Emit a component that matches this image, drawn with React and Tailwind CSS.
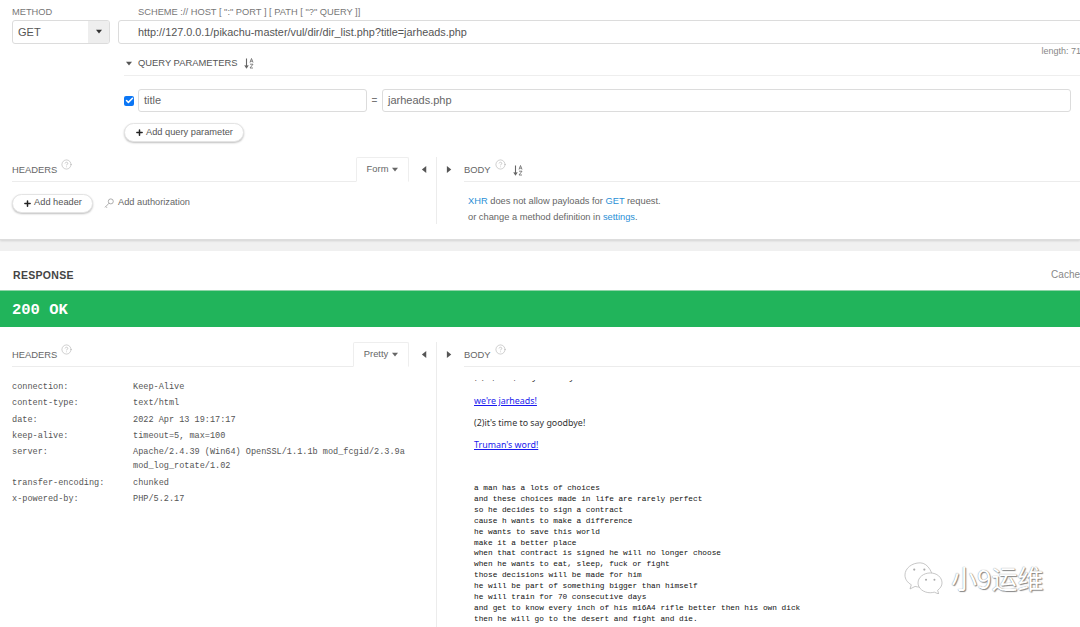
import { Check, CircleHelp, Plus } from 'lucide-react'

const SANS = 'font-["Liberation_Sans",Arial,sans-serif]'

const responseHeaders = [
  ['connection:', ['Keep-Alive']],
  ['content-type:', ['text/html']],
  ['date:', ['2022 Apr 13 19:17:17']],
  ['keep-alive:', ['timeout=5, max=100']],
  ['server:', ['Apache/2.4.39 (Win64) OpenSSL/1.1.1b mod_fcgid/2.3.9a', 'mod_log_rotate/1.02']],
  ['transfer-encoding:', ['chunked']],
  ['x-powered-by:', ['PHP/5.2.17']],
]

const poem = [
  'a man has a lots of choices',
  'and these choices made in life are rarely perfect',
  'so he decides to sign a contract',
  'cause h wants to make a difference',
  'he wants to save this world',
  'make it a better place',
  'when that contract is signed he will no longer choose',
  'when he wants to eat, sleep, fuck or fight',
  'those decisions will be made for him',
  'he will be part of something bigger than himself',
  'he will train for 70 consecutive days',
  'and get to know every inch of his m16A4 rifle better then his own dick',
  'then he will go to the desert and fight and die.',
  'that is the fight he is destined to do',
]

function Caret({ dir = 'down', className = '' }) {
  const points = { down: '0,1 8,1 4,6', left: '6,0 6,8 1,4', right: '1,0 1,8 6,4' }[dir]
  return (
    <svg viewBox="0 0 8 8" className={`shrink-0 ${className}`}>
      <polygon points={points} fill="currentColor" />
    </svg>
  )
}

function SortIcon() {
  return (
    <svg viewBox="0 0 10 11" className="w-[10px] h-[11px] text-[#666]">
      <path d="M2.5 0.5V9M0.8 7.2L2.5 9.8L4.2 7.2" fill="none" stroke="currentColor" strokeWidth="1.1" />
      <path d="M6 4.5L7.5 0.5L9 4.5M6.5 3.2H8.5M6 6.2H9L6 10H9" fill="none" stroke="currentColor" strokeWidth="0.8" />
    </svg>
  )
}

function KeyIcon() {
  return (
    <svg viewBox="0 0 10 11" className="w-[10px] h-[11px] text-[#999]" fill="none" stroke="currentColor" strokeWidth="0.8">
      <circle cx="6.8" cy="3.4" r="2.5" />
      <path d="M5 5.2L1 9.4M1.8 8.6L3 9.8" />
    </svg>
  )
}

function Help() {
  return <CircleHelp size={11} strokeWidth={1} className="text-[#999] -mt-[11px]" />
}

function PillButton({ children, className = '' }) {
  return (
    <button className={`flex items-center justify-center h-[19px] rounded-full bg-white border border-[#e4e4e4] shadow-[0_1px_2px_rgba(0,0,0,0.25)] text-[9.25px] text-[#555] ${className}`}>
      <Plus size={9} strokeWidth={4} className="text-[#222] mr-[2px]" />
      {children}
    </button>
  )
}

function Arrows() {
  return (
    <div className="flex w-[55px] shrink-0 text-[#555] h-full">
      <div className="w-[27px] flex justify-end pr-[8px] pt-[9px]"><Caret dir="left" className="w-[7px] h-[7px]" /></div>
      <div className="w-px bg-[#ececec]" />
      <div className="pl-[9px] pt-[9px]"><Caret dir="right" className="w-[7px] h-[7px]" /></div>
    </div>
  )
}

function SplitHeader({ tab, tabWidth, children }) {
  return (
    <div className="flex h-[25px] text-[9.4px] text-[#666]">
      <div className="w-[397px] flex justify-between items-end border-b border-[#ececec]">
        <div className="flex items-center gap-[4px] h-[23px] pt-[2px] pb-px">HEADERS <Help /></div>
        <div className={`${tabWidth} h-[25px] -mb-px flex items-center justify-center gap-[4px] border border-b-white border-[#eeeeee] rounded-t-[2px] bg-white`}>
          {tab} <Caret className="w-[6px] h-[6px]" />
        </div>
      </div>
      <Arrows />
      <div className="flex-1 flex items-center gap-[4px] border-b border-[#ececec] pt-[2px]">{children}</div>
    </div>
  )
}

export default function App() {
  return (
    <div className={`relative h-[627px] w-[1080px] overflow-hidden bg-[#f0f0f0] ${SANS}`}>
      {/* request */}
      <section className="h-[240px] bg-white pl-3 pt-[7px] border-b border-[#dddddd] shadow-[0_1px_2px_rgba(0,0,0,0.12)]">
        <div className="flex text-[9.3px] text-[#777] leading-[11px]">
          <div className="w-[103px]">METHOD</div>
          <div className="pl-[23px]">SCHEME :// HOST [ ":" PORT ] [ PATH [ "?" QUERY ]]</div>
        </div>
        <div className="flex mt-[2px] gap-[8px] h-[24px] text-[#555]">
          <div className="w-[98px] flex border border-[#dcdcdc] rounded-[3px] overflow-hidden">
            <div className="flex-1 pl-[5px] text-[11px] leading-[22px]">GET</div>
            <div className="w-[21px] bg-[#eeeeee] flex items-center justify-center text-[#333]"><Caret className="w-[6px] h-[6px]" /></div>
          </div>
          <div className="flex-1 -mr-[3px] pl-[19px] border border-[#dcdcdc] rounded-[3px] text-[10.85px] leading-[22px]">
            http://127.0.0.1/pikachu-master/vul/dir/dir_list.php?title=jarheads.php
          </div>
        </div>
        <div className="text-[9px] text-[#888] text-right -mr-[1px] leading-[11px] mt-[2px] whitespace-nowrap">length: 71</div>

        <div className="ml-[112px]">
          <div className="flex items-center h-[19px] border-b border-[#eeeeee] text-[9.4px] text-[#555] pb-[5px]">
            <Caret className="w-[6px] h-[6px] ml-[2px] mr-[6px]" />
            <span className="mr-[6px]">QUERY PARAMETERS</span>
            <SortIcon />
          </div>
          <div className="flex items-center mt-[13px] h-[23px] text-[11px] text-[#666]">
            <div className="w-[10px] h-[10px] rounded-[2px] bg-[#0b76f5] flex items-center justify-center">
              <Check size={9} strokeWidth={4} className="text-white" />
            </div>
            <div className="w-[229px] h-full ml-[4px] pl-[5px] border border-[#dcdcdc] rounded-[3px] leading-[21px]">title</div>
            <span className="w-[15px] text-center text-[10px] text-[#777]">=</span>
            <div className="w-[689px] h-full pl-[5px] border border-[#dcdcdc] rounded-[3px] leading-[21px]">jarheads.php</div>
          </div>
          <PillButton className="w-[120px] mt-[11px]">Add query parameter</PillButton>
        </div>

        <div className="mt-[15px]">
          <SplitHeader tab="Form" tabWidth="w-[53px]">
            BODY <Help /><span className="ml-[3px]"><SortIcon /></span>
          </SplitHeader>
          <div className="flex h-[42px]">
            <div className="w-[397px] flex items-center gap-[11px] h-[42px]">
              <PillButton className="w-[81px]">Add header</PillButton>
              <div className="flex items-center gap-[4px] text-[9.25px] text-[#666]">
                <KeyIcon />
                Add authorization
              </div>
            </div>
            <div className="w-[27px]" />
            <div className="w-px bg-[#ececec]" />
            <div className="pl-[31px] pt-[11px] text-[9.3px] leading-[16px] text-[#666]">
              <div><span className="text-[#2a8fd6]">XHR</span> does not allow payloads for <span className="text-[#2a8fd6]">GET</span> request.</div>
              <div>or change a method definition in <span className="text-[#2a8fd6]">settings</span>.</div>
            </div>
          </div>
        </div>
      </section>

      {/* response */}
      <section className="mt-[11px] h-[376px] bg-white">
        <div className="flex justify-between h-[39px] pt-[17px] pl-[13px] text-[10.5px] leading-[14px]">
          <span className="font-bold text-[#444] tracking-[0.3px]">RESPONSE</span>
          <span className="text-[#888] text-[10px]">Cache</span>
        </div>
        <div className="h-[37px] bg-[#21b45b] border-t border-[#8fd4a8] pl-3 leading-[39px] font-['Liberation_Mono',monospace] font-bold text-[15.5px] text-white">200 OK</div>

        <div className="pl-3 pt-[15px]">
          <SplitHeader tab="Pretty" tabWidth="w-[56px]">
            BODY <Help />
          </SplitHeader>
          <div className="flex">
            <div className="w-[397px] pt-[12px] font-['Liberation_Mono',monospace] text-[8.55px] text-[#555] leading-[14px]">
              {responseHeaders.map(([name, values]) => (
                <div key={name} className="flex py-[1.15px]">
                  <div className="w-[121px] shrink-0">{name}</div>
                  <div>{values.map(v => <div key={v}>{v}</div>)}</div>
                </div>
              ))}
            </div>
            <div className="w-[27px]" />
            <div className="w-px bg-[#ececec] h-[270px]" />
            <div className="pl-[37px] h-[270px] overflow-hidden flex-1">
              <div className="mt-[13px] h-[3px] overflow-hidden text-[9px] leading-[12px] text-[#333] font-['Noto_Sans',sans-serif] flex items-end">
                <span>(1)hi,man,are you ready?</span>
              </div>
              <div className="mt-[7px] font-['Noto_Sans',sans-serif] text-[8.9px] leading-[22px] text-[#333]">
                <div><a className="text-[#1a1aee] underline">we're jarheads!</a></div>
                <div>(2)it's time to say goodbye!</div>
                <div><a className="text-[#1a1aee] underline">Truman's word!</a></div>
              </div>
              <pre className="mt-[27px] font-['Liberation_Mono',monospace] text-[7.77px] leading-[10.9px] text-[#111]">
                {poem.join('\n')}
              </pre>
            </div>
          </div>
        </div>
      </section>

      {/* watermark */}
      <div className="absolute left-[903px] top-[562px] flex items-center gap-[7px]">
        <svg viewBox="0 0 46 38" className="w-[41px] h-[32px]" fill="#fff" stroke="#b5b5b5" strokeWidth="0.9">
          <path d="M19 1C9 1 1 7.5 1 15.5c0 5 3 9 7.500 11.500L7 32l6-3c2 .5 4 .8 6 .8 6 0 12-3 15-8 1-7-5-20.800-15-20.800z" />
          <path d="M31 13c-8 0-14.500 5.300-14.500 11.800S23 36.500 31 36.500c1.700 0 3.300-.3 4.800-.7l5.200 2.200-1.200-4.500c3.200-2.200 5.200-5.300 5.200-8.700C45 18.300 39 13 31 13z" />
          <circle cx="12" cy="9" r="1.300" fill="#aaa" stroke="none" />
          <circle cx="24" cy="9" r="1.300" fill="#aaa" stroke="none" />
          <circle cx="26" cy="21" r="1.200" fill="#aaa" stroke="none" />
          <circle cx="36" cy="21" r="1.200" fill="#aaa" stroke="none" />
        </svg>
        <span className="font-['Noto_Sans_CJK_SC',sans-serif] text-[26px] leading-none text-white [text-shadow:0_0_1px_#777,1px_1px_1px_#888]">小9运维</span>
      </div>
    </div>
  )
}
